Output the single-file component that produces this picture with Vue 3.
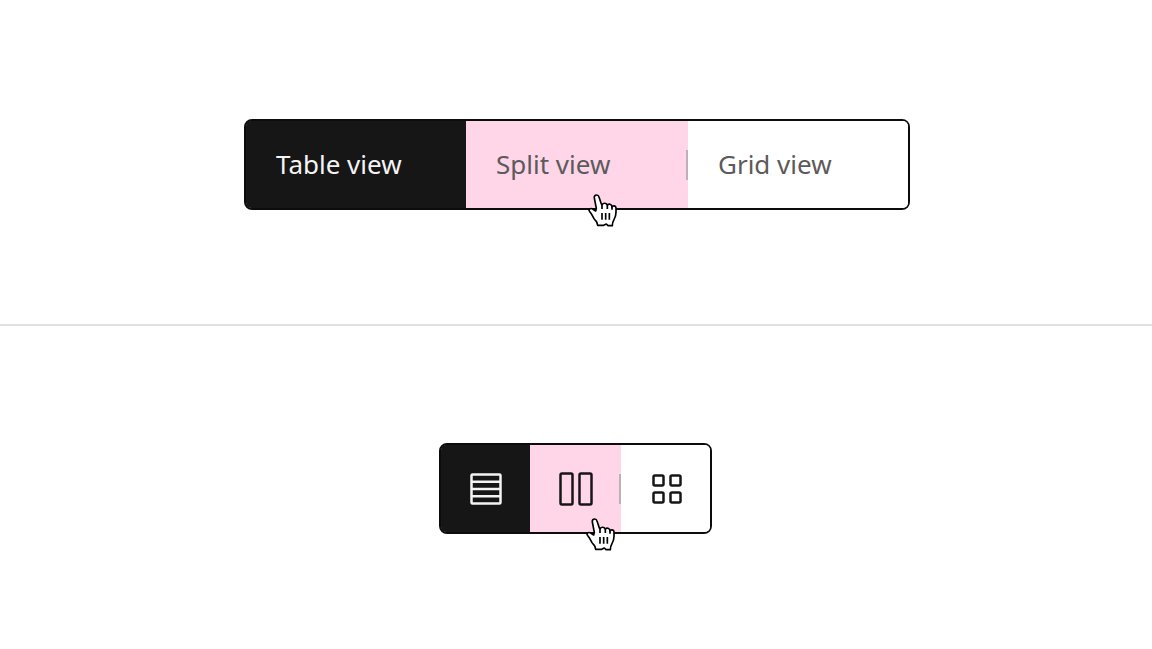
<script setup>
import { ref } from 'vue'

const views = [
  { id: 'table', label: 'Table view' },
  { id: 'split', label: 'Split view' },
  { id: 'grid', label: 'Grid view' }
]
const textView = ref('table')
const iconView = ref('table')
const pointed = 'split'
const handPath =
  'M50 20C45 20 42 24 43 29L49 60L47 68L38 62C33 59 27 61 27 66C27 69 32 73 35 78L42 91C45 96 51 99 51 104L53 111H71L79 107L84 112H97C97 103 99 99 102 94C106 87 108 80 108 72V59C108 52 99 50 96 56C96 47 85 45 82 51C80 43 70 43 66 49L64 47L57 26C56 22 54 20 50 20Z'
</script>

<template>
  <main class="page">
    <section class="panel panel-text">
      <div class="switcher switcher-text" role="group" aria-label="Content view">
        <button
          v-for="view in views"
          :key="view.id"
          type="button"
          class="segment"
          :class="{ selected: textView === view.id, hovered: pointed === view.id }"
          :aria-pressed="textView === view.id"
          @click="textView = view.id"
        >
          {{ view.label }}
          <svg v-if="pointed === view.id" class="hand" viewBox="24 17 87 99" aria-hidden="true">
            <path :d="handPath" class="hand-shape" />
            <path d="M66 74V94M77 74V94M88 74V94" class="hand-shape" />
            <path d="M66 49V62M82 51V62M96 56V64" class="hand-shape" />
          </svg>
        </button>
      </div>
    </section>

    <section class="panel panel-icon">
      <div class="switcher switcher-icon" role="group" aria-label="Content view icons">
        <button
          v-for="view in views"
          :key="view.id"
          type="button"
          class="segment"
          :class="{ selected: iconView === view.id, hovered: pointed === view.id }"
          :aria-pressed="iconView === view.id"
          :aria-label="view.label"
          @click="iconView = view.id"
        >
          <svg class="icon" viewBox="0 0 36 36" aria-hidden="true">
            <template v-if="view.id === 'table'">
              <rect x="3.5" y="3.5" width="29" height="29" rx="1" />
              <path d="M3 10.8H33M3 18H33M3 25.2H33" />
            </template>
            <template v-else-if="view.id === 'split'">
              <rect x="2.5" y="2.5" width="12" height="31" rx="1.5" />
              <rect x="21.5" y="2.5" width="12" height="31" rx="1.5" />
            </template>
            <template v-else>
              <rect x="5.5" y="4.5" width="10" height="10" rx="1.5" />
              <rect x="22.5" y="4.5" width="10" height="10" rx="1.5" />
              <rect x="5.5" y="21.5" width="10" height="10" rx="1.5" />
              <rect x="22.5" y="21.5" width="10" height="10" rx="1.5" />
            </template>
          </svg>
          <svg v-if="pointed === view.id" class="hand" viewBox="24 17 87 99" aria-hidden="true">
            <path :d="handPath" class="hand-shape" />
            <path d="M66 74V94M77 74V94M88 74V94" class="hand-shape" />
            <path d="M66 49V62M82 51V62M96 56V64" class="hand-shape" />
          </svg>
        </button>
      </div>
    </section>
  </main>
</template>

<style>
body {
  margin: 0;
  background: #fff;
}
</style>

<style scoped>
.page {
  display: grid;
  grid-template-rows: 1fr 1fr;
  min-height: 100vh;
}
.panel {
  display: flex;
  align-items: center;
  justify-content: center;
}
.panel-text {
  padding: 4px 0 0 2px;
}
.panel-icon {
  margin-top: -1px;
  padding: 3px 1px 0 0;
  border-top: 2px solid #e0e0e0;
}
.switcher {
  display: grid;
  grid-template-columns: 110fr 111fr 110fr;
  box-sizing: border-box;
  border: 2px solid #0c0c0c;
  border-radius: 8px;
}
.switcher-text {
  width: 666px;
  max-width: 90%;
}
.switcher-icon {
  grid-template-columns: 89fr 91fr 89fr;
  width: 273px;
}
.segment {
  position: relative;
  min-height: 87px;
  margin: 0;
  padding: 0 30px;
  border: 0;
  background: #fff;
  color: #5c5a5a;
  font-family: "Noto Sans", "Open Sans", sans-serif;
  font-size: 26px;
  font-weight: 400;
  line-height: 32px;
  text-align: left;
  cursor: pointer;
}
.segment:first-child {
  border-radius: 5px 0 0 5px;
}
.segment:last-child {
  border-radius: 0 5px 5px 0;
}
.switcher-icon .segment {
  display: flex;
  align-items: center;
  justify-content: center;
  padding: 0;
  color: #161616;
}
.segment.hovered {
  background: #ffd5e8;
  z-index: 1;
}
.segment.hovered::after {
  content: "";
  position: absolute;
  top: 29px;
  right: 0;
  width: 2px;
  height: 30px;
  background: #bdb1b7;
}
.segment.selected,
.switcher-icon .segment.selected {
  background: #161616;
  color: #f4f4f4;
}
.icon {
  width: 36px;
  height: 36px;
  fill: none;
  stroke: currentColor;
  stroke-width: 2.5;
}
.hand {
  position: absolute;
  top: 73px;
  left: 122px;
  width: 29px;
  height: 33px;
}
.switcher-icon .hand {
  left: 56px;
}
.hand-shape {
  fill: #fff;
  stroke: #000;
  stroke-width: 5;
  stroke-linejoin: round;
}
</style>
